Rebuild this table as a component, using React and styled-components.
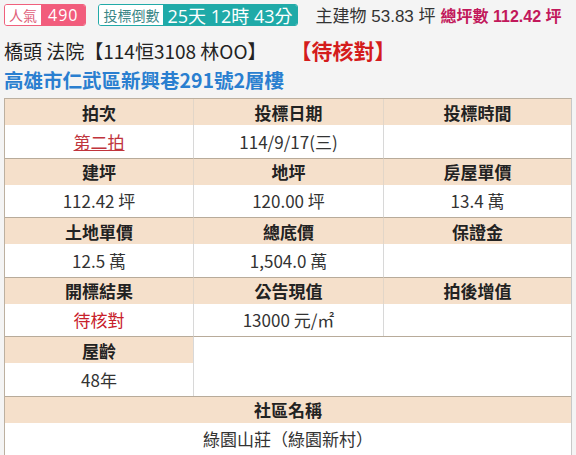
import React from 'react';
import styled, { createGlobalStyle } from 'styled-components';

const GlobalStyle = createGlobalStyle`
  body {
    margin: 0;
    background: #f4f4f4;
    font-family: "Liberation Sans", "Noto Sans CJK TC", sans-serif;
    color: #222;
  }
`;

const Page = styled.div`
  width: 576px;
  padding: 3px 0 0 4px;
  box-sizing: border-box;
  overflow: hidden;
`;

const TopBar = styled.div`
  display: flex;
  align-items: center;
  height: 23px;
  white-space: nowrap;
`;

const Badge = styled.div`
  display: flex;
  align-items: stretch;
  height: 22px;
  border: 1px solid ${(p) => p.$color};
  border-radius: 3px;
  box-sizing: border-box;
  margin-right: ${(p) => p.$gap || 0}px;
  flex-shrink: 0;
`;

const BadgeLabel = styled.span`
  display: flex;
  align-items: center;
  padding: 0 4px;
  background: #fff;
  border-radius: 2px 0 0 2px;
  color: ${(p) => p.$color};
  font-size: 14px;
  font-family: "Noto Sans CJK TC", sans-serif;
`;

const BadgeValue = styled.span`
  display: flex;
  align-items: center;
  padding: 0 ${(p) => p.$pad || 8}px;
  background: ${(p) => p.$color};
  border-radius: 0 2px 2px 0;
  color: #fff;
  font-size: ${(p) => p.$size || 15}px;
  letter-spacing: ${(p) => p.$spacing || 0}px;
  font-family: "Open Sans", "Noto Sans CJK TC", sans-serif;
`;

const Area = styled.span`
  font-size: 17px;
  color: #333;
  margin-right: 5px;
`;

const TotalArea = styled.span`
  font-size: 16px;
  font-weight: bold;
  color: #c2185b;
`;

const TitleRow = styled.div`
  display: flex;
  align-items: center;
  margin-top: 11px;
  height: 26px;
  white-space: nowrap;
`;

const Title = styled.span`
  font-size: 19px;
  color: #222;
  font-family: "Noto Sans CJK TC", sans-serif;
`;

const Status = styled.span`
  margin-left: 24px;
  font-size: 21px;
  font-weight: bold;
  color: #d41c1c;
  font-family: "Noto Sans CJK TC", sans-serif;
`;

const Address = styled.div`
  margin-top: 2px;
  height: 30px;
  font-size: 19.5px;
  font-weight: bold;
  color: #2a7fd0;
  font-family: "Noto Sans CJK TC", sans-serif;
  white-space: nowrap;
`;

const Table = styled.div`
  margin-top: 3px;
  width: 566px;
  display: grid;
  grid-template-columns: 188px 190px 1fr;
  border: 1px solid #bcb0a0;
  border-right-color: #c8c8c8;
  background: #fff;
  font-family: "Noto Sans CJK TC", sans-serif;
`;

const HeadCell = styled.div`
  grid-column: span ${(p) => p.$span || 1};
  height: 26px;
  display: flex;
  align-items: center;
  justify-content: center;
  background: #f5e0cb;
  font-size: 17px;
  font-weight: bold;
  color: #222;
  border-top: ${(p) => (p.$first ? 'none' : '1px solid #b8ab9a')};
  border-left: ${(p) => (p.$col > 0 ? '1px solid #e2d6c8' : 'none')};
`;

const ValueCell = styled.div`
  grid-column: span ${(p) => p.$span || 1};
  height: 32.5px;
  display: flex;
  align-items: center;
  justify-content: center;
  background: #fff;
  font-size: 17px;
  color: ${(p) => p.$color || '#333'};
  text-decoration: ${(p) => (p.$link ? 'underline' : 'none')};
  border-left: ${(p) => (p.$col > 0 ? '1px solid #d8d8d8' : 'none')};
`;

const EmptyCell = styled.div`
  grid-column: span 2;
  grid-row: span 2;
  background: #fff;
  border-top: 1px solid #b8ab9a;
  border-left: 1px solid #d8d8d8;
`;

const rows = [
  [
    { h: '拍次', v: '第二拍', color: '#c0343c', link: true },
    { h: '投標日期', v: '114/9/17(三)' },
    { h: '投標時間', v: '' },
  ],
  [
    { h: '建坪', v: '112.42 坪' },
    { h: '地坪', v: '120.00 坪' },
    { h: '房屋單價', v: '13.4 萬' },
  ],
  [
    { h: '土地單價', v: '12.5 萬' },
    { h: '總底價', v: '1,504.0 萬' },
    { h: '保證金', v: '' },
  ],
  [
    { h: '開標結果', v: '待核對', color: '#c8202a' },
    { h: '公告現值', v: '13000 元/㎡' },
    { h: '拍後增值', v: '' },
  ],
];

export default function App() {
  return (
    <>
      <GlobalStyle />
      <Page>
        <TopBar>
          <Badge $color="#f0607c" $gap={12}>
            <BadgeLabel $color="#e0607a">人氣</BadgeLabel>
            <BadgeValue $color="#f25c7c" $size={16} $spacing={1} $pad={7}>
              490
            </BadgeValue>
          </Badge>
          <Badge $color="#22aaa8" $gap={18}>
            <BadgeLabel $color="#3a8686">投標倒數</BadgeLabel>
            <BadgeValue $color="#1faaa8" $size={18} $pad={4}>
              25天 12時 43分
            </BadgeValue>
          </Badge>
          <Area>主建物 53.83 坪</Area>
          <TotalArea>總坪數 112.42 坪</TotalArea>
        </TopBar>
        <TitleRow>
          <Title>橋頭 法院【114恒3108 林OO】</Title>
          <Status>【待核對】</Status>
        </TitleRow>
        <Address>高雄市仁武區新興巷291號2層樓</Address>
        <Table>
          {rows.map((row, r) => (
            <React.Fragment key={r}>
              {row.map((c, i) => (
                <HeadCell key={'h' + i} $col={i} $first={r === 0}>
                  {c.h}
                </HeadCell>
              ))}
              {row.map((c, i) => (
                <ValueCell key={'v' + i} $col={i} $color={c.color} $link={c.link}>
                  {c.v}
                </ValueCell>
              ))}
            </React.Fragment>
          ))}
          <HeadCell $col={0}>屋齡</HeadCell>
          <EmptyCell />
          <ValueCell $col={0}>48年</ValueCell>
          <HeadCell $span={3} $col={0}>社區名稱</HeadCell>
          <ValueCell $span={3} $col={0}>綠園山莊（綠園新村）</ValueCell>
        </Table>
      </Page>
    </>
  );
}
